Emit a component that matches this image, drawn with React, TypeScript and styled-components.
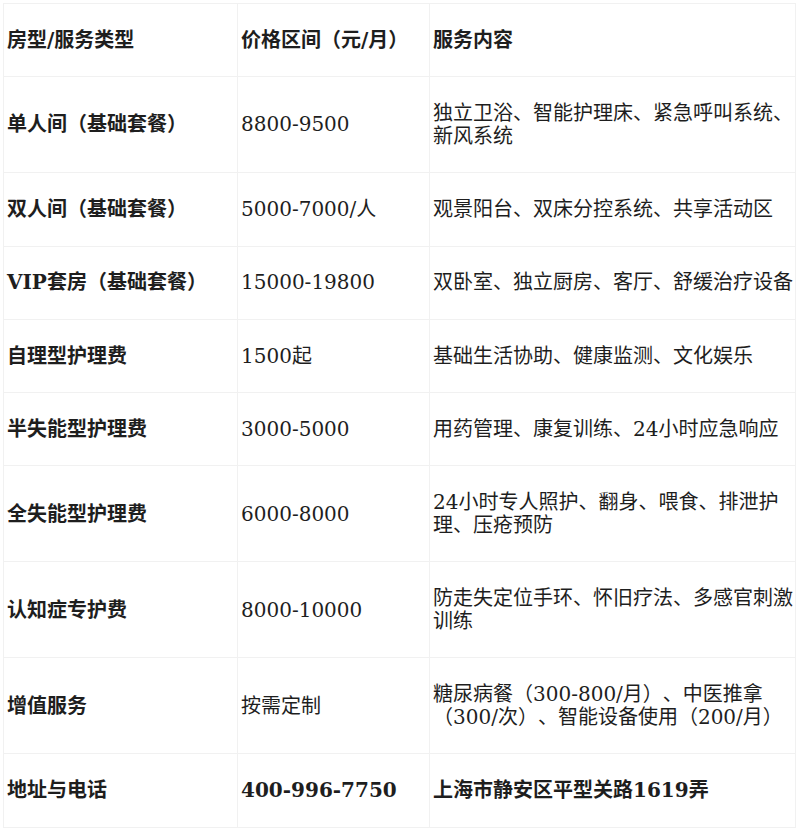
import styled, { createGlobalStyle } from "styled-components";

const GlobalStyle = createGlobalStyle`
  html, body {
    margin: 0;
    padding: 0;
    background: #ffffff;
  }
  body {
    font-family: "DejaVu Serif", "Noto Sans CJK SC", serif;
    color: #1e1e1e;
  }
`;

const Page = styled.div`
  padding: 3px 5px 3px 3px;
`;

const Table = styled.table`
  width: 792px;
  border-collapse: collapse;
  table-layout: fixed;
  font-size: 20px;
  line-height: 22.7px;
  text-spacing-trim: space-all;
`;

const Cell = styled.td<{ $bold?: boolean }>`
  border: 1px solid #f1f1f1;
  padding: 24.8px 1px 24.8px 3px;
  vertical-align: middle;
  text-align: left;
  font-weight: ${(p) => (p.$bold ? 700 : 400)};
`;

const HeadCell = styled.th`
  border: 1px solid #f1f1f1;
  padding: 24.8px 1px 24.8px 3px;
  text-align: left;
  font-weight: 700;
`;

type Row = {
  kind: string;
  price: string;
  detail: string;
  strong?: boolean;
};

const rows: Row[] = [
  {
    kind: "单人间（基础套餐）",
    price: "8800-9500",
    detail: "独立卫浴、智能护理床、紧急呼叫系统、新风系统",
  },
  {
    kind: "双人间（基础套餐）",
    price: "5000-7000/人",
    detail: "观景阳台、双床分控系统、共享活动区",
  },
  {
    kind: "VIP套房（基础套餐）",
    price: "15000-19800",
    detail: "双卧室、独立厨房、客厅、舒缓治疗设备",
  },
  {
    kind: "自理型护理费",
    price: "1500起",
    detail: "基础生活协助、健康监测、文化娱乐",
  },
  {
    kind: "半失能型护理费",
    price: "3000-5000",
    detail: "用药管理、康复训练、24小时应急响应",
  },
  {
    kind: "全失能型护理费",
    price: "6000-8000",
    detail: "24小时专人照护、翻身、喂食、排泄护理、压疮预防",
  },
  {
    kind: "认知症专护费",
    price: "8000-10000",
    detail: "防走失定位手环、怀旧疗法、多感官刺激训练",
  },
  {
    kind: "增值服务",
    price: "按需定制",
    detail: "糖尿病餐（300-800/月）、中医推拿（300/次）、智能设备使用（200/月）",
  },
  {
    kind: "地址与电话",
    price: "400-996-7750",
    detail: "上海市静安区平型关路1619弄",
    strong: true,
  },
];

export default function App() {
  return (
    <>
      <GlobalStyle />
      <Page>
        <Table>
          <colgroup>
            <col style={{ width: 234 }} />
            <col style={{ width: 192 }} />
            <col style={{ width: 366 }} />
          </colgroup>
          <thead>
            <tr>
              <HeadCell>房型/服务类型</HeadCell>
              <HeadCell>价格区间（元/月）</HeadCell>
              <HeadCell>服务内容</HeadCell>
            </tr>
          </thead>
          <tbody>
            {rows.map((r) => (
              <tr key={r.kind}>
                <Cell $bold>{r.kind}</Cell>
                <Cell $bold={r.strong}>{r.price}</Cell>
                <Cell $bold={r.strong}>{r.detail}</Cell>
              </tr>
            ))}
          </tbody>
        </Table>
      </Page>
    </>
  );
}
